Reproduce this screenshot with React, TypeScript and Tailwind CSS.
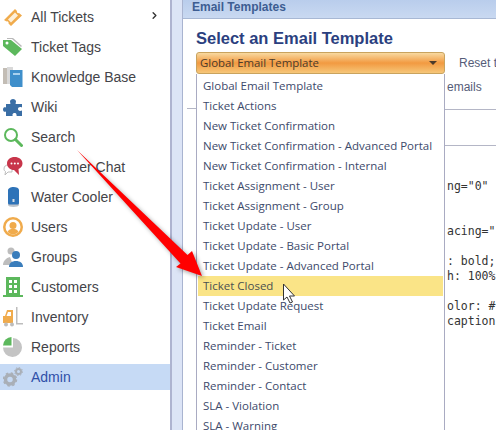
import { ChevronRight } from "lucide-react";

const sidebarItems = [
  { label: "All Tickets", icon: <TicketIcon /> },
  { label: "Ticket Tags", icon: <TagIcon /> },
  { label: "Knowledge Base", icon: <BooksIcon /> },
  { label: "Wiki", icon: <PuzzleIcon /> },
  { label: "Search", icon: <SearchIcon /> },
  { label: "Customer Chat", icon: <ChatIcon /> },
  { label: "Water Cooler", icon: <CoolerIcon /> },
  { label: "Users", icon: <UserIcon /> },
  { label: "Groups", icon: <GroupIcon /> },
  { label: "Customers", icon: <BuildingIcon /> },
  { label: "Inventory", icon: <ForkliftIcon /> },
  { label: "Reports", icon: <PieIcon /> },
  { label: "Admin", icon: <GearsIcon /> },
];

const templates = [
  "Global Email Template",
  "Ticket Actions",
  "New Ticket Confirmation",
  "New Ticket Confirmation - Advanced Portal",
  "New Ticket Confirmation - Internal",
  "Ticket Assignment - User",
  "Ticket Assignment - Group",
  "Ticket Update - User",
  "Ticket Update - Basic Portal",
  "Ticket Update - Advanced Portal",
  "Ticket Closed",
  "Ticket Update Request",
  "Ticket Email",
  "Reminder - Ticket",
  "Reminder - Customer",
  "Reminder - Contact",
  "SLA - Violation",
  "SLA - Warning",
];

function TicketIcon() {
  return (
    <svg viewBox="0 0 20 20" className="w-5 h-5">
      <path d="M1 13 12 2l2 2c-.6 1.200.8 2.600 2 2l3 2.500L8 19l-2.500-2.500c.6-1.200-.8-2.700-2-2Z" fill="#f0ab4c" />
      <path d="M5 12.500 12 5.500l3 3-7 7Z" fill="#fdf0da" />
    </svg>
  );
}

function TagIcon() {
  return (
    <svg viewBox="0 0 20 20" className="w-5 h-5">
      <path d="M4 1h6l9 8-1 1-9-8H4Z" fill="#b9b9b9" />
      <path d="M0 3h8l11 9-7 7L0 9Z" fill="#5cb85c" />
      <circle cx="4" cy="6" r="1.500" fill="#fff" />
    </svg>
  );
}

function BooksIcon() {
  return (
    <svg viewBox="0 0 20 20" className="w-5 h-5">
      <path d="M0 1h6v16H0Z" fill="#c3bdb5" />
      <path d="M4 0h6v17H4Z" fill="#d9d9d9" />
      <path d="M7 3h12.500v17H9l-2-2Z" fill="#3f8fcb" />
      <path d="M10 6h7v2h-7Z" fill="#a9d1ee" />
    </svg>
  );
}

function PuzzleIcon() {
  return (
    <svg viewBox="0 0 20 20" className="w-5 h-5">
      <path d="M3 7h4c1 0 0-1.500 0-2.500C7 3 8.500 2 10 2s3 1 3 2.500c0 1-1 2.500 0 2.500h6v3.500c-2.500-1-4 0-4 1.500s1.500 2.500 4 1.500V19h-5c-1 0 0-1.500-1-2.500-1.500-1-3.500 0-3.500 1 0 1 .5 1.500-.5 1.500H3v-4.500c-1 .5-3 .5-3-2s2-2.500 3-2Z" fill="#3a6ea5" />
    </svg>
  );
}

function SearchIcon() {
  return (
    <svg viewBox="0 0 20 20" className="w-5 h-5" fill="none">
      <circle cx="8" cy="8" r="6" stroke="#5cb85c" strokeWidth="2" />
      <path d="m12.500 12.500 6 6" stroke="#5cb85c" strokeWidth="3" strokeLinecap="round" />
    </svg>
  );
}

function ChatIcon() {
  return (
    <svg viewBox="0 0 20 20" className="w-5 h-5">
      <path d="M1 12c0-3 2-4 4-4h4v7H5l-3 3 .5-3.500C1.500 14 1 13 1 12Z" fill="#fff" stroke="#bdbdbd" />
      <path d="M11.500 0C7.500 0 4 2.500 4 6.500S7.500 13 11 13l5 5-.5-6c2.500-1 4-3 4-5.500C19.500 2.500 16 0 11.500 0Z" fill="#c8354a" />
      <circle cx="8.500" cy="6.500" r="1" fill="#fff" />
      <circle cx="11.800" cy="6.500" r="1" fill="#fff" />
      <circle cx="15" cy="6.500" r="1" fill="#fff" />
    </svg>
  );
}

function CoolerIcon() {
  return (
    <svg viewBox="0 0 20 20" className="w-5 h-5">
      <path d="M5 15h11v3c0 1-2.500 2-5.500 2S5 19 5 18Z" fill="#bcc3cb" />
      <path d="M5 3c0-1.500 2.500-3 5.500-3S16 1 16 3v13c0 1-1 1.500-2 1.500H7c-1 0-2-.5-2-1.500Z" fill="#2e73b8" />
      <rect x="9.500" y="12" width="2" height="3" fill="#d8dde3" />
    </svg>
  );
}

function UserIcon() {
  return (
    <svg viewBox="0 0 20 20" className="w-5 h-5">
      <circle cx="10" cy="10" r="10" fill="#f0ab4c" />
      <circle cx="10" cy="10" r="7.500" fill="#fff" />
      <circle cx="10" cy="8.500" r="3.500" fill="#f0ab4c" />
      <path d="M4.500 15c1-2.500 3-3 5.500-3s4.500.5 5.500 3a7.500 7.500 0 0 1-11 0Z" fill="#f0ab4c" />
    </svg>
  );
}

function GroupIcon() {
  return (
    <svg viewBox="0 0 20 20" className="w-5 h-5">
      <circle cx="8" cy="4" r="3.500" fill="#bdbdbd" />
      <path d="M0 18c0-4 3-7 7-8l3 8Z" fill="#bdbdbd" />
      <circle cx="13" cy="8" r="4" fill="#3a7dbb" />
      <path d="M6 20c0-4 3-6 7-6s7 2 7 6Z" fill="#3a7dbb" />
    </svg>
  );
}

function BuildingIcon() {
  return (
    <svg viewBox="0 0 20 20" className="w-5 h-5">
      <path d="M3 0h14v18h3v2H0v-2h3Z" fill="#5cb85c" />
      <path d="M6 3h3v3H6Zm5 0h3v3h-3ZM6 8h3v3H6Zm5 0h3v3h-3Zm-5 5h3v3H6Zm5 0h3v3h-3Z" fill="#fff" />
    </svg>
  );
}

function ForkliftIcon() {
  return (
    <svg viewBox="0 0 20 20" className="w-5 h-5">
      <path d="M13 0h1.500v16H20v1.500h-7Z" fill="#bdbdbd" />
      <path d="M0 9h2l2-6h6v13H0Z" fill="#f0ab4c" />
      <path d="M5 5h3v4H3.500Z" fill="#fff" />
      <circle cx="3" cy="17.500" r="2" fill="#bdbdbd" />
      <circle cx="9" cy="17.500" r="2" fill="#bdbdbd" />
    </svg>
  );
}

function PieIcon() {
  return (
    <svg viewBox="0 0 20 20" className="w-5 h-5">
      <path d="M10 1a9.500 9.500 0 1 1-10 9.500h10Z" fill="#c4c4c4" />
      <path d="M8.500 0v8.500H0A9 9 0 0 1 8.500 0Z" fill="#5cb85c" />
    </svg>
  );
}

function GearsIcon() {
  return (
    <svg viewBox="0 0 20 20" className="w-5 h-5" fill="none">
      <circle cx="7" cy="12.500" r="4.500" stroke="#a9afb7" strokeWidth="3.500" />
      <circle cx="7" cy="12.500" r="6.500" stroke="#a9afb7" strokeWidth="1.500" strokeDasharray="2.500 2.600" />
      <circle cx="15.500" cy="4.500" r="2.500" stroke="#a9afb7" strokeWidth="2" />
      <circle cx="15.500" cy="4.500" r="4" stroke="#a9afb7" strokeWidth="1" strokeDasharray="1.500 1.600" />
    </svg>
  );
}

function Sidebar() {
  return (
    <nav className="w-[170px] shrink-0 bg-white flex flex-col pt-[2px] font-['Liberation_Sans',sans-serif]">
      {sidebarItems.map((item) => (
        <div
          key={item.label}
          className={`pl-[3px] flex items-center gap-2 text-[14px] ${
            item.label === "Admin" ? "bg-[#c6daf5] text-[#2f4fa8] h-[26px] mt-[2px]" : "h-[30px] text-[#444449]"
          }`}
        >
          <span className="w-5 h-5 shrink-0">{item.icon}</span>
          <span className="flex-1">{item.label}</span>
          {item.label === "All Tickets" && <ChevronRight size={11} strokeWidth={3} className="text-[#333] mr-2.5 -mt-1" />}
        </div>
      ))}
    </nav>
  );
}

function TemplateDropdown() {
  return (
    <div className="w-[249px] shrink-0 font-['Open_Sans',sans-serif]">
      <div className="h-[22px] flex items-center justify-between pl-[3px] pr-[5px] rounded-[3px] border border-[#c9a35e] bg-[linear-gradient(#f8d9a0,#f29a41_50%,#f6c779)] text-[#4a3a2a] text-[11.400px]">
        Global Email Template
        <span className="mr-[2px] border-x-[4px] border-x-transparent border-t-[4px] border-t-[#4b3a2a]" />
      </div>
      <ul className="bg-white border-x border-[#a9abc2] pt-[2px] px-[1px] text-[11.500px] text-[#3d4a6b]">
        {templates.map((name) => (
          <li
            key={name}
            className={`h-5 flex items-center px-[5px] whitespace-nowrap ${
              name === "Ticket Closed" ? "bg-[#fae487] text-[#4a5050]" : ""
            }`}
          >
            {name}
          </li>
        ))}
      </ul>
    </div>
  );
}

function CodePeek() {
  return (
    <div className="flex-1 min-w-0 text-[#555c78] font-['Liberation_Sans',sans-serif] text-[12px] overflow-hidden">
      <p className="pl-[14px] h-[22px] flex items-center whitespace-nowrap">Reset t</p>
      <p className="h-6 flex items-center pl-0.5 pt-0.5">emails</p>
      <div className="mt-[11px] border-t border-[#b4b6c6] h-9" />
      <div className="border-t border-[#b4b6c6]" />
      <pre className="font-['DejaVu_Sans_Mono',monospace] text-[11.500px] leading-[15px] text-[#333] pl-0.5 pt-[33px]">
        {'ng="0"\n\n\nacing="\n\n: bold;\nh: 100%\n\nolor: #f\ncaption'}
      </pre>
    </div>
  );
}

export default function App() {
  return (
    <div className="relative w-[496px] h-[430px] overflow-hidden flex bg-[#dce4f6]">
      <Sidebar />
      <div className="w-[13px] shrink-0 border-l-2 border-[#aeb3d0] border-r border-r-[#a9b4d0]" />
      <main className="relative flex-1 min-w-0 bg-white">
        <div className="h-[19px] pl-[9px] pb-1 flex items-center bg-[linear-gradient(#b9cdec,#c9d9f1)] border-b border-[#a8b8d4] text-[12px] font-bold text-[#3d5d92] font-['Liberation_Sans',sans-serif]">
          Email Templates
        </div>
        {/* rule that runs behind the open dropdown */}
        <div className="absolute left-[4px] top-[108px] w-[9px] border-t border-[#b4b6c6]" />
        <div className="pl-[13px]">
          <h1 className="h-[33px] flex items-center pt-[5px] text-[16.500px] font-bold text-[#2b3f7f] font-['Liberation_Sans',sans-serif]">
            Select an Email Template
          </h1>
          <div className="flex">
            <TemplateDropdown />
            <CodePeek />
          </div>
        </div>
      </main>

      {/* red arrow pointing at the highlighted row, and the mouse pointer */}
      <svg className="absolute left-0 top-0 pointer-events-none" width="496" height="430">
        <path
          d="M77 150 187.500 255 192 251 202 276 176 267 180.500 263.500Z"
          fill="#ff0000"
          className="drop-shadow-[2px_2px_2px_rgba(0,0,0,0.35)]"
        />
        <path d="M283.500 284v16l3.500-3 3 6 2.500-1-3-6h5Z" fill="#fff" stroke="#333" strokeWidth="1" />
      </svg>
    </div>
  );
}
